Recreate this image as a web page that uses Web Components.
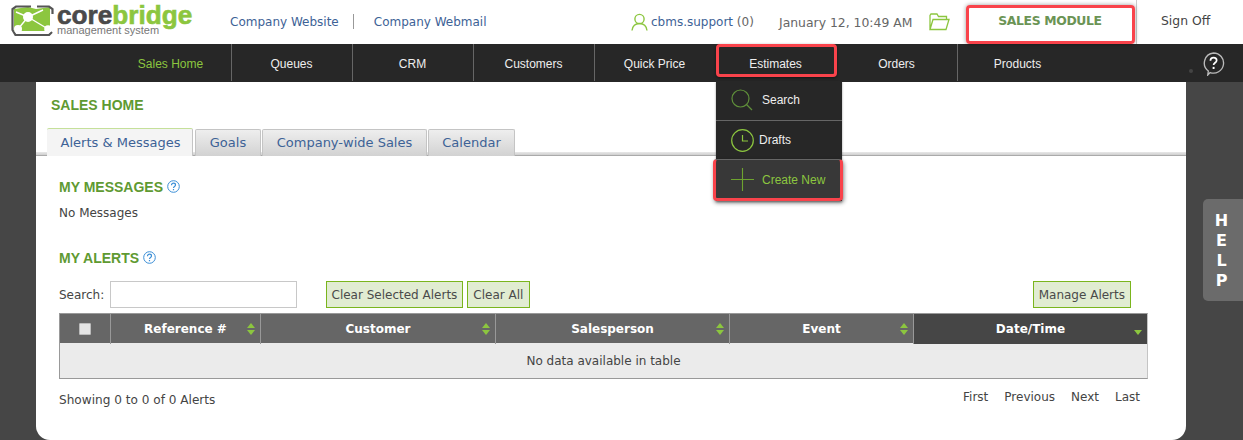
<!DOCTYPE html>
<html>
<head>
<meta charset="utf-8">
<title>Sales Home</title>
<style>
html, body { margin: 0; height: 440px; overflow: hidden; background: #464646; }
body { font-family: "DejaVu Sans", Verdana, sans-serif; font-size: 12px; color: #444; position: relative; }
</style>
</head>
<body>
<cb-header></cb-header>
<cb-nav></cb-nav>
<cb-page></cb-page>
<cb-help></cb-help>

<script>
const RED = "#f9434b";

class CbHeader extends HTMLElement {
  constructor() {
    super();
    this.attachShadow({ mode: "open" });
  }

  connectedCallback() {
    this.shadowRoot.innerHTML = `
<style>
:host { display: flex; align-items: center; height: 44px; background: #fff; position: relative; }
.logo { display: flex; width: 220px; padding-left: 11px; box-sizing: border-box; flex: none; align-self: flex-start; padding-top: 4px; }
.logo svg { flex: none; }
.word { margin-left: 2px; font-family: "Liberation Sans", Arial, sans-serif; }
.big { font-size: 26.2px; font-weight: 700; line-height: 22px; height: 22px; color: #4a4a4a; -webkit-text-stroke: .6px; white-space: nowrap; }
.big span { color: #8cc63f; }
.sub { font-size: 11px; line-height: 9px; color: #777; white-space: nowrap; }
.links { display: flex; align-items: center; flex: none; width: 397px; margin-left: 10px; font-size: 12px; padding-bottom: 1px; color: #3d6296; }
.links i { width: 1px; height: 15px; background: #999; margin: 0 20px 0 14px; }
.user { display: flex; align-items: center; flex: none; margin-left: 4px; width: 148px; font-size: 12px; color: #666; }
.user svg { margin-right: 3px; }
.date { width: 150px; flex: none; font-size: 12.4px; color: #666; }
.folder { flex: none; width: 37px; display: flex; }
.module { width: 168px; flex: none; text-align: center; font: 700 12.4px "DejaVu Sans", sans-serif; color: #6b9455; letter-spacing: -.35px; padding-bottom: 3px; box-sizing: border-box; }
.bar { width: 1px; height: 44px; background: #ccc; margin-left: 2px; flex: none; }
.sign { margin-left: 24px; font-size: 12.4px; color: #444; padding-bottom: 3px; }
</style>
<div class="logo">
  <svg width="44" height="32" viewBox="0 0 44 32">
    <path d="M3 5l14-2 8 2 14-2v24H3z" fill="#8cc63f"/>
    <path d="M20 2.500H5L1.500 5v21l3 5H38l3-3M26 2.500h12l3.500 2.500v5" fill="none" stroke="#555" stroke-width="2.200"/>
    <path d="M17 13L7 25M17 13L5 8M17 13L32 6M17 13L37 25" stroke="#fff" stroke-width="1.400" fill="none"/>
    <circle cx="17" cy="13" r="5" fill="#fff"/><circle cx="7" cy="25" r="4" fill="#fff"/>
    <circle cx="37" cy="25" r="3.800" fill="#fff"/>
  </svg>
  <div class="word">
    <div class="big">core<span>bridge</span></div>
    <div class="sub">management system</div>
  </div>
</div>
<div class="links">
  <span>Company Website</span><i></i><span>Company Webmail</span>
</div>
<div class="user">
  <svg width="17" height="18" viewBox="0 0 17 18" fill="none" stroke="#8cc63f" stroke-width="1.4">
    <circle cx="8.500" cy="6" r="4.600"/><path d="M1 17.500c.6-4.400 3-7 7.500-7s6.900 2.600 7.500 7"/>
  </svg>
  <span style="color:#3d6296">cbms.support</span>&nbsp;(0)
</div>
<div class="date">January 12, 10:49 AM</div>
<div class="folder">
  <svg width="21" height="18" viewBox="0 0 21 18" fill="none" stroke="#8cc63f" stroke-width="1.300">
    <path d="M1 16.500V2.500l1-1.500h6l1.500 2.500h8v3M1 16.500l3-10h16l-3 10z"/>
  </svg>
</div>
<div class="module">SALES MODULE</div>
<div class="bar"></div>
<div class="sign">Sign Off</div>
`;
  }
}
customElements.define("cb-header", CbHeader);

class CbNav extends HTMLElement {
  constructor() {
    super();
    this.attachShadow({ mode: "open" });
  }

  get items() {
    return ["Sales Home", "Queues", "CRM", "Customers", "Quick Price", "Estimates", "Orders", "Products"];
  }

  connectedCallback() {
    const cells = this.items.map((name, i) => {
      let cls = "cell";
      if (i === 0) cls += " on";
      if (i === 4 || i === 5 || i === 7) cls += " nosep";
      return `<div class="${cls}">${name}</div>`;
    }).join("");
    this.shadowRoot.innerHTML = `
<style>
:host { display: flex; height: 38px; background: #272727; padding-left: 111px; position: relative; z-index: 2; }
.cell { width: 121px; height: 37px; box-sizing: border-box; padding-right: 1px; text-align: center; color: #eee; font: 12px/40px "Liberation Sans", Arial, sans-serif; border-right: 1px solid #666; }
.nosep { border-right-color: transparent; }
.on { color: #8cc63f; }
.ask { position: absolute; left: 1202px; top: 8px; }
.dot { position: absolute; left: 1189px; top: 25px; width: 4px; height: 4px; border-radius: 2px; background: #444; }
.hl { position: absolute; left: 716px; top: 0; width: 121px; height: 33px; box-sizing: border-box; border: 3px solid ${RED}; border-radius: 4px; box-shadow: 0 1px 3px rgba(0,0,0,.5); }
.hl2 { position: absolute; left: 966px; top: -39px; width: 169px; height: 39px; box-sizing: border-box; border: 3px solid ${RED}; border-radius: 4px; box-shadow: 0 0 4px rgba(0,0,0,.4); }
</style>
${cells}
<div class="hl"></div>
<div class="hl2"></div>
<div class="dot"></div>
<svg class="ask" width="23" height="24" viewBox="0 0 24 25" fill="none" stroke="#bbb" stroke-width="1.400">
  <path d="M12 1a10.500 10.500 0 1 1-3.500 20.400L6 24l.6-4.200A10.500 10.500 0 0 1 12 1z"/>
  <path d="M8.800 9c0-2 1.400-3.200 3.300-3.200s3.200 1.200 3.200 2.800c0 2.600-3.200 2.600-3.200 5" stroke="#fff" stroke-width="1.800"/>
  <path d="M12.100 15.500v2.200" stroke="#fff" stroke-width="2"/>
</svg>
<cb-menu></cb-menu>
`;
  }
}
customElements.define("cb-nav", CbNav);

class CbMenu extends HTMLElement {
  constructor() {
    super();
    this.attachShadow({ mode: "open" });
  }

  connectedCallback() {
    this.shadowRoot.innerHTML = `
<style>
:host { display: block; position: absolute; left: 716px; top: 37px; width: 126px; background: #272727; font: 12px "Liberation Sans", Arial, sans-serif; color: #eee; box-shadow: 0 1px 2px rgba(0,0,0,.4); }
.row { display: flex; align-items: center; box-sizing: border-box; height: 40px; }
.row + .row { border-top: 1px solid #666; }
.search { height: 39px; padding: 0 0 2px 15px; gap: 9px; }
.drafts { padding-left: 15px; gap: 5px; height: 39px; }
.create { height: 42px; gap: 8px; background: #383838; color: #8cc63f; border: 3px solid ${RED}; border-radius: 4px; margin: 0 -1px 0 -3px; padding: 1px 0 0 15px; box-shadow: 1px 2px 4px rgba(0,0,0,.45); position: relative; }
</style>
<div class="row search">
  <svg width="22" height="22" viewBox="0 0 22 22" fill="none" stroke="#5f8f3a" stroke-width="1.200"><circle cx="9.500" cy="9.500" r="8.500"/><path d="M15.500 15.500l5.500 5.500"/></svg>
  <span>Search</span>
</div>
<div class="row drafts">
  <svg width="23" height="23" viewBox="0 0 23 23" fill="none" stroke="#8cc63f" stroke-width="1.200"><circle cx="11.500" cy="11.500" r="10.800"/><path d="M11.500 6v6h5.500"/></svg>
  <span>Drafts</span>
</div>
<div class="row create">
  <svg width="23" height="23" viewBox="0 0 23 23" fill="none" stroke="#6ea32f" stroke-width="1.100"><path d="M11.500 0v23M0 11.500h23"/></svg>
  <span>Create New</span>
</div>
`;
  }
}
customElements.define("cb-menu", CbMenu);

class CbTabs extends HTMLElement {
  constructor() {
    super();
    this.attachShadow({ mode: "open" });
  }

  connectedCallback() {
    const tabs = [["Alerts &amp; Messages", 146], ["Goals", 66], ["Company-wide Sales", 165], ["Calendar", 87]];
    const html = tabs.map(([t, w], i) =>
      `<div class="tab${i === 0 ? " on" : ""}" style="width:${w}px">${t}</div>`).join("");
    this.shadowRoot.innerHTML = `
<style>
:host { display: flex; align-items: flex-end; gap: 1px; height: 28px; padding-left: 11px; margin-top: 15px; position: relative; background: linear-gradient(#fff 0 24px, #e8e8e8 24px, #cfcfcf 27px, #aaa 27px); }
.tab { box-sizing: border-box; height: 27px; line-height: 25px; text-align: center; font-size: 13px; color: #3d6296; border: 1px solid #c4c4c4; border-bottom: 0; border-radius: 2px 2px 0 0; background: linear-gradient(#eee, #d2d2d2); }
.on { height: 28px; background: #f4f4f4; border: 0; border-top: 1px solid #c5e09a; border-right: 1px solid #c4c4c4; line-height: 27px; margin-right: 1px; padding-left: 2px; }
</style>
${html}
`;
  }
}
customElements.define("cb-tabs", CbTabs);

class CbTitle extends HTMLElement {
  constructor() {
    super();
    this.attachShadow({ mode: "open" }).innerHTML = `
<style>
:host { display: flex; align-items: center; gap: 4px; font: 700 14px/16px "Liberation Sans", Arial, sans-serif; color: #5f9a32; }
svg { display: block; margin-top: -2px; }
</style>
<slot></slot>
<svg width="13" height="13" viewBox="0 0 13 13" fill="none" stroke="#3a8ed6"><circle cx="6.500" cy="6.500" r="5.800"/><path d="M4.500 5.200c0-1.400 1-2 2-2s2 .6 2 1.800c0 1.500-2 1.500-2 3M6.500 9v1.300" stroke-width="1.200"/></svg>
`;
  }
}
customElements.define("cb-title", CbTitle);

class CbButton extends HTMLElement {
  constructor() {
    super();
    this.attachShadow({ mode: "open" }).innerHTML = `
<style>
:host { display: block; box-sizing: border-box; height: 27px; line-height: 26px; padding: 0 4.500px; background: #e1ecd2; border: 1px solid #7ab51d; color: #4a4a4a; font-size: 12px; white-space: nowrap; text-align: center; }
</style>
<slot></slot>
`;
  }
}
customElements.define("cb-button", CbButton);

class CbSort extends HTMLElement {
  constructor() {
    super();
    const only = this.getAttribute("dir") === "down";
    this.attachShadow({ mode: "open" }).innerHTML = `
<style>
:host { position: absolute; right: 5px; top: 9px; display: block; line-height: 0; }
</style>
<svg width="8" height="12" viewBox="0 0 8 12" fill="#8cc63f">
  ${only ? "" : '<path d="M4 0l4 5H0z"/>'}
  <path d="M0 7h8l-4 5z"/>
</svg>
`;
  }
}
customElements.define("cb-sort", CbSort);

class CbTable extends HTMLElement {
  constructor() {
    super();
    this.attachShadow({ mode: "open" });
  }

  connectedCallback() {
    const cols = ["Reference #", "Customer", "Salesperson", "Event"];
    const heads = cols.map(c => `<div class="th">${c}<cb-sort></cb-sort></div>`).join("");
    this.shadowRoot.innerHTML = `
<style>
:host { display: block; box-sizing: border-box; height: 66px; border: 1px solid #999; border-right-color: #c4c4c4; margin-top: 5px; background: #ebebeb; }
.head { display: grid; grid-template-columns: 51px 150px 235px 234px 184px 1fr; height: 29px; background: #666; color: #fff; font-weight: 700; font-size: 12px; }
.th { position: relative; border-right: 1px solid #999; line-height: 30px; text-align: center; }
.th.box { display: flex; align-items: center; justify-content: center; box-sizing: border-box; padding-bottom: 1px; }
.th.box i { width: 10px; height: 10px; background: #e4e4e4; border: 1px solid #bbb; border-radius: 1px; }
.th.last { background: #464646; border: 0; }
.empty { text-align: center; line-height: 37px; color: #444; font-size: 12px; }
</style>
<div class="head">
  <div class="th box"><i></i></div>
  ${heads}
  <div class="th last">Date/Time<cb-sort dir="down"></cb-sort></div>
</div>
<div class="empty">No data available in table</div>
`;
  }
}
customElements.define("cb-table", CbTable);

class CbPage extends HTMLElement {
  constructor() {
    super();
    this.attachShadow({ mode: "open" });
  }

  connectedCallback() {
    this.shadowRoot.innerHTML = `
<style>
:host { display: block; box-sizing: border-box; width: 1150px; height: 358px; margin-left: 36px; background: #fff; border-radius: 0 0 14px 14px; padding-top: 15px; color: #444; position: relative; }
.h1 { font: 700 14px/16px "Liberation Sans", Arial, sans-serif; color: #5f9a32; margin-left: 15px; }
.body { padding: 0 38px 0 23px; }
.msg { margin-top: 23px; }
.none { margin-top: 10px; line-height: 16px; }
.alerts { margin-top: 29px; }
.tools { display: flex; align-items: center; margin-top: 15px; }
.tools label { width: 51px; }
.tools input { box-sizing: border-box; width: 187px; height: 27px; border: 1px solid #c8c8c8; background: #fff; margin: 0 29px 0 0; padding: 0; }
.tools cb-button + cb-button { margin-left: 4px; }
.tools .push { margin-left: auto !important; margin-right: 17px; padding: 0 5px; }
.tools .all { padding: 0 5.500px; }
.foot { display: flex; justify-content: space-between; margin-top: 13px; line-height: 16px; font-size: 12.1px; }
.pager { display: flex; gap: 16px; margin-right: 8px; margin-top: -3px; font-size: 12px; }
</style>
<div class="h1">SALES HOME</div>
<cb-tabs></cb-tabs>
<div class="body">
  <cb-title class="msg">MY MESSAGES</cb-title>
  <div class="none">No Messages</div>
  <cb-title class="alerts">MY ALERTS</cb-title>
  <div class="tools">
    <label>Search:</label>
    <input type="text">
    <cb-button>Clear Selected Alerts</cb-button>
    <cb-button class="all">Clear All</cb-button>
    <cb-button class="push">Manage Alerts</cb-button>
  </div>
  <cb-table></cb-table>
  <div class="foot">
    <div>Showing 0 to 0 of 0 Alerts</div>
    <div class="pager"><span>First</span><span>Previous</span><span>Next</span><span>Last</span></div>
  </div>
</div>
`;
  }
}
customElements.define("cb-page", CbPage);

class CbHelp extends HTMLElement {
  constructor() {
    super();
    this.attachShadow({ mode: "open" }).innerHTML = `
<style>
:host { position: absolute; left: 1203px; top: 199px; width: 40px; height: 102px; box-sizing: border-box; background: #6b6b6b; border-radius: 5px 0 0 5px; color: #fff; font: 700 16px/20px "DejaVu Sans", sans-serif; text-align: center; padding: 12px 3px 0 0; display: block; }
div { height: 20px; }
</style>
<div>H</div><div>E</div><div>L</div><div>P</div>
`;
  }
}
customElements.define("cb-help", CbHelp);
</script>
</body>
</html>
